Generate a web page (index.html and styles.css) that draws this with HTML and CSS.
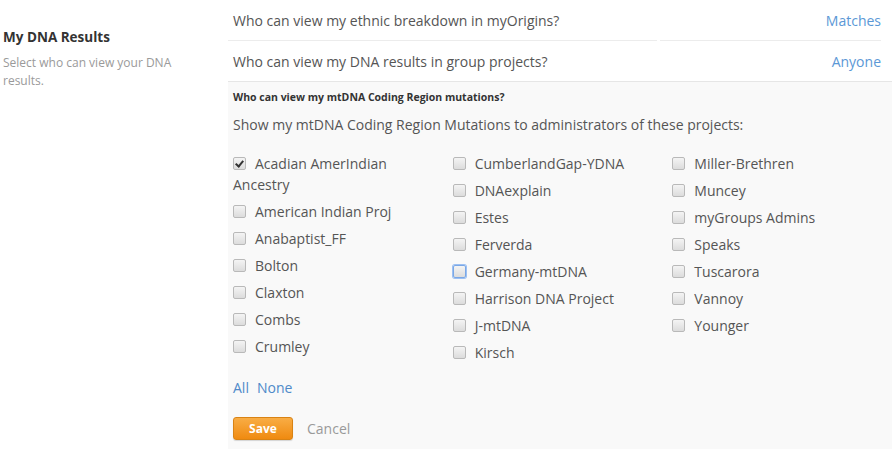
FILE: index.html
```html
<!DOCTYPE html>
<html>
<head>
<meta charset="utf-8">
<link rel="stylesheet" href="styles.css">
</head>
<body>
<div class="page">
  <aside class="sidebar">
    <h2 class="side-title">My DNA Results</h2>
    <p class="side-desc">Select who can view your DNA results.</p>
  </aside>
  <main class="main">
    <div class="row row-first">
      <div class="row-label">Who can view my ethnic breakdown in myOrigins?</div>
      <div class="row-value"><a class="link">Matches</a></div>
    </div>
    <div class="row">
      <div class="row-label plain">Who can view my DNA results in group projects?</div>
      <div class="row-value plain"><a class="link">Anyone</a></div>
    </div>
    <section class="panel">
      <h3 class="panel-title">Who can view my mtDNA Coding Region mutations?</h3>
      <p class="panel-lead">Show my mtDNA Coding Region Mutations to administrators of these projects:</p>
      <div class="lists">
        <ul class="col">
          <li><span class="cb checked"></span>Acadian AmerIndian Ancestry</li>
          <li><span class="cb"></span>American Indian Proj</li>
          <li><span class="cb"></span>Anabaptist_FF</li>
          <li><span class="cb"></span>Bolton</li>
          <li><span class="cb"></span>Claxton</li>
          <li><span class="cb"></span>Combs</li>
          <li><span class="cb"></span>Crumley</li>
        </ul>
        <ul class="col">
          <li><span class="cb"></span>CumberlandGap-YDNA</li>
          <li><span class="cb"></span>DNAexplain</li>
          <li><span class="cb"></span>Estes</li>
          <li><span class="cb"></span>Ferverda</li>
          <li><span class="cb focus"></span>Germany-mtDNA</li>
          <li><span class="cb"></span>Harrison DNA Project</li>
          <li><span class="cb"></span>J-mtDNA</li>
          <li><span class="cb"></span>Kirsch</li>
        </ul>
        <ul class="col">
          <li><span class="cb"></span>Miller-Brethren</li>
          <li><span class="cb"></span>Muncey</li>
          <li><span class="cb"></span>myGroups Admins</li>
          <li><span class="cb"></span>Speaks</li>
          <li><span class="cb"></span>Tuscarora</li>
          <li><span class="cb"></span>Vannoy</li>
          <li><span class="cb"></span>Younger</li>
        </ul>
      </div>
      <div class="select-links"><a class="link2">All</a><a class="link2">None</a></div>
      <div class="actions">
        <button class="btn-save">Save</button>
        <a class="cancel">Cancel</a>
      </div>
    </section>
  </main>
</div>
</body>
</html>
```
FILE: styles.css
```css
html, body {
  margin: 0;
  padding: 0;
  background: #fff;
  font-family: "Open Sans", "DejaVu Sans", sans-serif;
  color: #555;
}
.page {
  display: flex;
  align-items: flex-start;
}
.sidebar {
  width: 225px;
  padding: 27px 0 0 3px;
  flex: none;
}
.side-title {
  margin: 0;
  font-size: 13.5px;
  line-height: 20px;
  font-weight: 700;
  color: #333;
}
.side-desc {
  margin: 7px 0 0;
  font-size: 12px;
  line-height: 18px;
  color: #9a9a9a;
  width: 190px;
}
.main {
  flex: 1;
  min-width: 0;
}
.row {
  display: flex;
  margin-right: 11px;
  height: 40px;
  font-size: 14px;
}
.row-first {
  height: 41px;
}
.row-label {
  flex: 1;
  padding-left: 5px;
  display: flex;
  align-items: center;
  border-bottom: 1px solid #ececec;
  color: #555;
}
.row-value {
  width: 221px;
  margin-left: 3px;
  display: flex;
  align-items: center;
  justify-content: flex-end;
  border-bottom: 1px solid #ececec;
}
.row-label.plain, .row-value.plain {
  border-bottom: none;
}
.link {
  color: #5b98d6;
}
.panel {
  background: #f9f9f9;
  border-top: 1px solid #e6e6e6;
  padding: 7px 0 9px 5px;
}
.panel-title {
  margin: 0;
  font-size: 10.5px;
  line-height: 16px;
  font-weight: 700;
  color: #333;
}
.panel-lead {
  margin: 9px 0 0;
  font-size: 14px;
  line-height: 21px;
  color: #555;
}
.lists {
  display: flex;
  margin-top: 18px;
}
.col {
  list-style: none;
  margin: 0;
  padding: 0;
  width: 220px;
}
.col li {
  font-size: 14px;
  line-height: 21px;
  margin-bottom: 6px;
  padding-right: 30px;
  color: #555;
}
.cb {
  display: inline-block;
  box-sizing: border-box;
  width: 13px;
  height: 13px;
  border: 1px solid #b9b9b9;
  border-radius: 2px;
  background: linear-gradient(#f4f4f4, #dcdcdc);
  margin: 4px 9px 0 0;
  vertical-align: top;
  position: relative;
}
.cb.checked::after {
  content: "";
  position: absolute;
  left: 3px;
  top: 1px;
  width: 3px;
  height: 6px;
  border-right: 2px solid #333;
  border-bottom: 2px solid #333;
  transform: rotate(40deg);
}
.cb.focus {
  border-color: #7aa7e6;
  box-shadow: 0 0 0 1px #9cc0f2;
}
.select-links {
  margin-top: 9px;
  font-size: 14px;
  line-height: 20px;
}
.link2 {
  color: #4f8ac9;
  margin-right: 8px;
}
.actions {
  margin-top: 19px;
  display: flex;
  align-items: center;
}
.btn-save {
  width: 60px;
  height: 23px;
  border: 1px solid #d98314;
  border-radius: 3px;
  background: linear-gradient(#f9ad45, #ef8a10);
  color: #fff;
  font-family: "Open Sans", "DejaVu Sans", sans-serif;
  font-weight: 700;
  font-size: 12px;
  padding: 0;
  box-shadow: 0 1px 1px rgba(0,0,0,0.15);
}
.cancel {
  margin-left: 14px;
  font-size: 14px;
  color: #999;
}
```
